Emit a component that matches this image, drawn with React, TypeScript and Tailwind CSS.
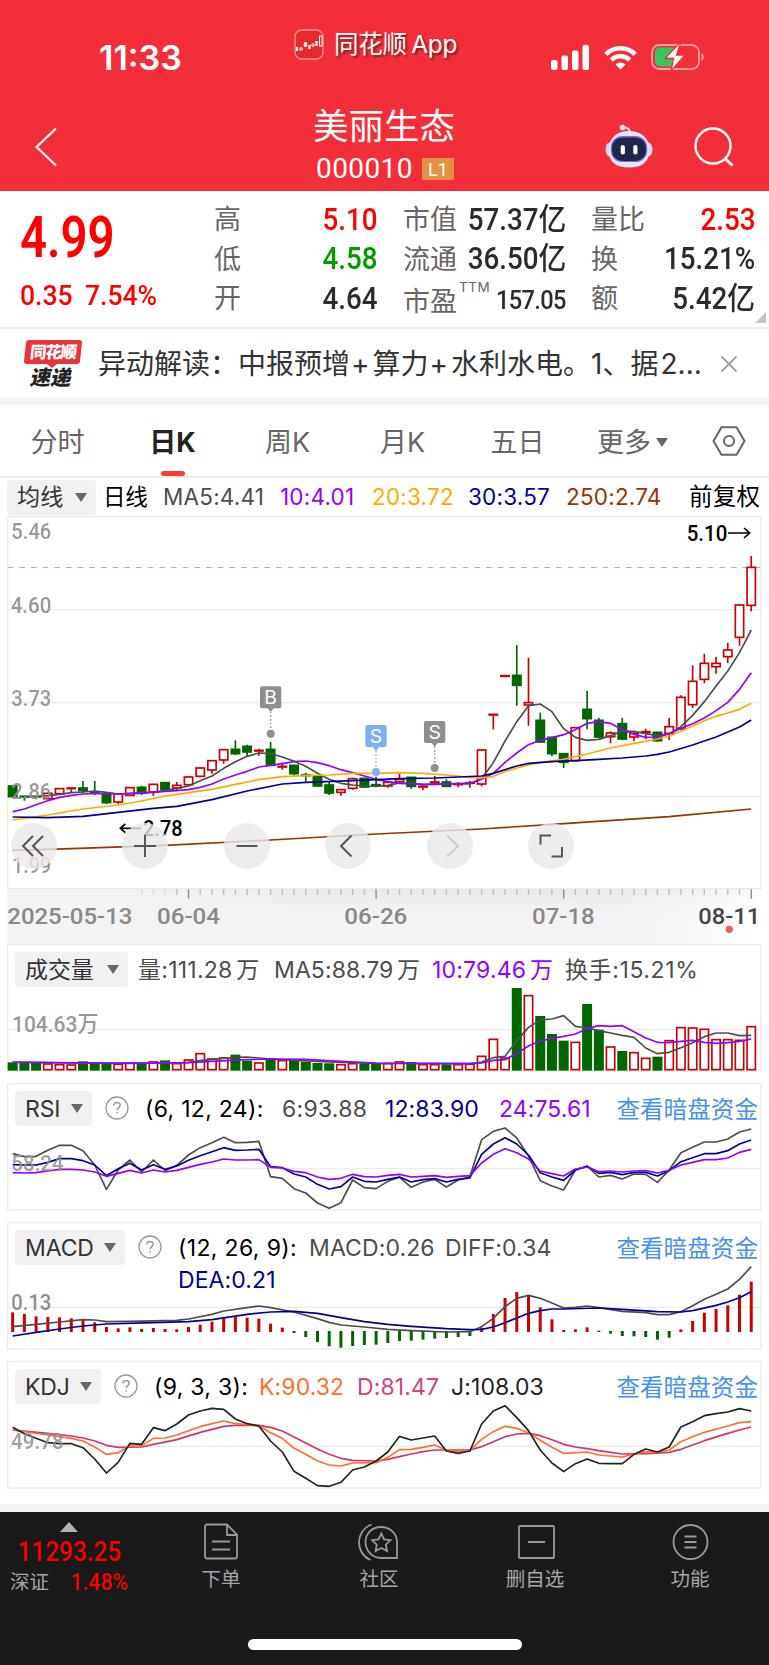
import { cva } from "class-variance-authority";
import { clsx } from "clsx";
import type { ReactNode } from "react";

type Ponto = [number, number];
// cor, máxima, topo do corpo, base do corpo, mínima
type Candle = ["r" | "g", number, number, number, number];

// charts are drawn at 3x
const X0 = 38;
const STEP = 35.17;
const px = (i: number) => X0 + STEP * i;

const RED = "#cc0000";
const GREEN = "#006600";
const GRAY = "#4d4d4d";
const NAVY = "#000099";
const PURPLE = "#9500ff";
const ORANGE = "#ffaa00";
const BROWN = "#993300";
const GRID = "#ebebeb";

const candles: Candle[] = [
  ["g", 828, 828, 860, 860], ["g", 858, 858, 862, 872], ["g", 857, 858, 863, 868], ["r", 848, 850, 866, 868],
  ["r", 834, 836, 851, 853], ["r", 833, 833, 838, 848], ["g", 813, 834, 842, 850], ["g", 813, 846, 851, 855],
  ["g", 852, 852, 878, 882], ["r", 850, 852, 876, 882], ["r", 831, 833, 856, 858], ["g", 827, 832, 848, 855],
  ["r", 821, 823, 846, 858], ["g", 817, 818, 838, 842], ["r", 816, 826, 834, 840], ["r", 798, 801, 824, 826],
  ["r", 772, 774, 799, 801], ["r", 750, 752, 780, 791], ["r", 717, 719, 750, 761], ["g", 691, 718, 731, 735],
  ["g", 704, 709, 726, 740], ["r", 716, 720, 725, 737], ["g", 695, 718, 766, 768], ["r", 758, 768, 773, 779],
  ["g", 766, 766, 791, 796], ["g", 788, 794, 800, 815], ["g", 799, 799, 828, 830], ["g", 815, 825, 849, 855],
  ["r", 836, 839, 847, 857], ["r", 803, 806, 835, 839], ["g", 805, 805, 831, 833], ["g", 800, 823, 829, 830],
  ["r", 812, 817, 828, 833], ["r", 790, 808, 815, 818], ["g", 801, 802, 829, 836], ["r", 826, 828, 833, 840],
  ["r", 798, 815, 820, 822], ["g", 808, 816, 829, 831], ["r", 817, 821, 826, 832], ["r", 812, 817, 822, 833],
  ["r", 718, 720, 822, 829], ["r", 612, 612, 617, 658], ["r", 496, 496, 500, 500], ["g", 405, 496, 526, 587],
  ["r", 443, 578, 585, 647], ["g", 608, 631, 696, 698], ["g", 680, 682, 731, 739], ["g", 729, 731, 757, 774],
  ["r", 651, 653, 752, 754], ["g", 543, 598, 626, 658], ["g", 624, 631, 681, 685], ["r", 664, 669, 680, 700],
  ["g", 624, 641, 687, 691], ["r", 666, 670, 681, 694], ["r", 656, 664, 669, 687], ["g", 665, 667, 692, 695],
  ["r", 624, 650, 670, 690], ["r", 556, 562, 657, 660], ["r", 466, 514, 584, 594], ["r", 431, 460, 508, 520],
  ["r", 441, 460, 470, 491], ["r", 399, 420, 440, 459], ["r", 283, 285, 382, 407], ["r", 138, 172, 286, 304],
];

const ma5: Ponto[] = [[1, 860], [2, 860], [3, 857], [4, 853], [5, 848], [6, 846], [7, 843], [8, 847], [9, 852], [10, 850], [11, 848], [12, 846], [13, 842], [14, 835], [15, 828], [16, 812], [17, 798], [18, 775], [19, 755], [20, 739], [21, 729], [22, 731], [23, 741], [24, 754], [25, 769], [26, 790], [27, 808], [28, 820], [29, 825], [30, 828], [31, 829], [32, 826], [33, 819], [34, 820], [35, 823], [36, 822], [37, 822], [38, 820], [39, 820], [40, 806], [41, 758], [42, 693], [43, 635], [44, 587], [45, 582], [46, 605], [47, 656], [48, 682], [49, 691], [50, 688], [51, 677], [52, 663], [53, 664], [54, 671], [55, 677], [56, 671], [57, 650], [58, 616], [59, 575], [60, 528], [61, 483], [62, 428], [63, 360]];
const ma10: Ponto[] = [[0, 905], [1, 897], [2, 884], [3, 872], [4, 862], [5, 856], [6, 852], [7, 850], [8, 851], [9, 852], [10, 851], [11, 850], [12, 847], [13, 844], [14, 842], [15, 839], [16, 832], [17, 822], [18, 807], [19, 795], [20, 784], [21, 771], [22, 766], [23, 761], [24, 755], [25, 753], [26, 758], [27, 767], [28, 779], [29, 788], [30, 798], [31, 808], [32, 815], [33, 820], [34, 822], [35, 824], [36, 823], [37, 822], [38, 822], [39, 821], [40, 808], [41, 790], [42, 757], [43, 729], [44, 704], [45, 691], [46, 683], [47, 674], [48, 659], [49, 640], [50, 635], [51, 640], [52, 659], [53, 673], [54, 682], [55, 681], [56, 672], [57, 655], [58, 641], [59, 624], [60, 602], [61, 577], [62, 538], [63, 488]];
const ma20: Ponto[] = [[0, 930], [3, 915], [6, 897], [9, 885], [11, 873], [13, 858], [15, 848], [17, 838], [19, 823], [21, 809], [23, 800], [25, 797], [27, 795], [29, 790], [31, 790], [33, 788], [35, 790], [37, 795], [39, 802], [40, 804], [41, 799], [42, 785], [43, 774], [44, 765], [45, 757], [47, 748], [49, 732], [51, 714], [53, 700], [55, 687], [56, 678], [57, 664], [58, 648], [59, 632], [60, 619], [61, 609], [62, 598], [63, 580]];
const ma30: Ponto[] = [[0, 921], [3, 923], [6, 919], [9, 907], [12, 895], [14, 889], [17, 869], [20, 843], [23, 822], [25, 817], [29, 812], [31, 809], [33, 806], [36, 804], [38, 801], [40, 798], [41, 790], [43, 768], [44, 760], [46, 755], [48, 752], [50, 748], [52, 744], [54, 738], [55, 733], [56, 726], [58, 705], [60, 681], [62, 651], [63, 630]];
const ma250: Ponto[] = [[0, 1021], [5, 1016], [13, 1006], [22, 990], [31, 972], [40, 957], [47, 941], [56, 920], [63, 897]];

const volumes = [
  367, 369, 367, 372, 374, 375, 364, 366, 370, 373, 370, 371, 366, 361, 371, 360, 341, 357, 354, 344, 362, 369,
  355, 362, 362, 366, 369, 370, 374, 371, 370, 370, 371, 366, 366, 374, 374, 373, 374, 373, 349, 298, 354, 144,
  167, 228, 282, 302, 307, 192, 269, 321, 333, 338, 355, 350, 302, 263, 264, 268, 299, 299, 301, 260,
];
const volMa5: Ponto[] = [[0, 367], [6, 369], [14, 369], [15, 367], [16, 362], [17, 358], [19, 352], [20, 351], [21, 354], [22, 357], [24, 361], [27, 366], [31, 370], [39, 371], [40, 366], [41, 353], [42, 349], [43, 302], [44, 262], [45, 240], [46, 237], [47, 227], [48, 259], [49, 264], [50, 272], [51, 279], [52, 286], [53, 292], [54, 324], [55, 341], [56, 337], [57, 323], [58, 308], [59, 290], [60, 279], [61, 279], [62, 287], [63, 286]];
const volMa10: Ponto[] = [[0, 366], [4, 368], [9, 370], [15, 368], [17, 364], [20, 359], [22, 357], [25, 358], [28, 364], [31, 369], [39, 371], [40, 369], [41, 361], [42, 359], [43, 340], [44, 318], [45, 303], [46, 295], [47, 289], [48, 282], [49, 266], [50, 257], [51, 259], [52, 257], [53, 275], [54, 294], [55, 307], [56, 308], [57, 304], [58, 301], [59, 307], [60, 310], [61, 308], [62, 304], [63, 297]];

const seq = (ys: number[]): Ponto[] => ys.map((y, i) => [i, y]);

const rsi6 = seq([641, 650, 649, 631, 616, 616, 632, 675, 748, 690, 660, 696, 660, 692, 676, 645, 623, 608, 592, 608, 607, 604, 710, 715, 746, 759, 789, 805, 788, 720, 743, 746, 724, 712, 742, 726, 718, 741, 720, 710, 599, 574, 564, 594, 648, 722, 738, 750, 690, 678, 711, 706, 717, 702, 703, 727, 690, 638, 622, 606, 606, 597, 576, 567]);
const rsi12 = seq([674, 675, 675, 667, 656, 656, 662, 675, 707, 686, 670, 690, 674, 688, 678, 661, 647, 635, 623, 631, 630, 628, 680, 683, 702, 711, 733, 747, 740, 711, 724, 726, 718, 711, 726, 719, 716, 726, 718, 714, 643, 612, 593, 612, 645, 698, 711, 721, 690, 679, 700, 697, 704, 697, 697, 708, 692, 665, 653, 641, 641, 632, 612, 600]);
const rsi24 = seq([698, 699, 698, 693, 688, 688, 690, 696, 709, 700, 691, 699, 690, 696, 691, 682, 673, 666, 657, 660, 660, 659, 682, 684, 694, 698, 711, 718, 715, 703, 710, 711, 706, 703, 711, 709, 707, 712, 709, 707, 669, 643, 626, 638, 657, 693, 701, 708, 687, 681, 695, 693, 696, 693, 692, 699, 691, 675, 667, 659, 659, 654, 637, 628]);

const macd = [
  292, 297, 304, 306, 307, 310, 315, 322, 336, 340, 337, 342, 339, 342, 343, 336, 329, 320, 310, 306, 308, 311,
  326, 338, 354, 366, 381, 394, 398, 393, 390, 389, 384, 378, 377, 374, 371, 369, 366, 363, 338, 297, 249, 231,
  240, 277, 313, 345, 343, 337, 347, 356, 363, 364, 366, 374, 368, 343, 318, 293, 282, 271, 239, 200,
];
const diff: Ponto[] = [[0, 335], [2, 328], [4, 321], [6, 314], [7, 315], [8, 320], [10, 319], [14, 316], [15, 312], [17, 298], [18, 288], [20, 278], [21, 273], [22, 278], [24, 291], [26, 311], [27, 322], [28, 330], [30, 336], [32, 343], [34, 347], [37, 351], [39, 350], [40, 335], [41, 310], [42, 275], [43, 250], [44, 241], [45, 250], [46, 264], [47, 279], [48, 277], [49, 273], [50, 278], [52, 289], [54, 293], [55, 299], [56, 299], [57, 290], [58, 272], [59, 253], [60, 238], [61, 222], [62, 193], [63, 155]];
const dea: Ponto[] = [[0, 363], [2, 352], [4, 342], [6, 333], [8, 327], [12, 323], [15, 320], [17, 314], [20, 298], [22, 291], [24, 289], [26, 295], [28, 308], [30, 320], [32, 328], [34, 334], [37, 341], [39, 344], [40, 343], [41, 336], [42, 323], [43, 309], [44, 295], [45, 287], [46, 282], [47, 282], [50, 279], [52, 283], [55, 290], [57, 291], [58, 287], [60, 271], [61, 261], [62, 248], [63, 230]];

const linhaJ = seq([637, 656, 670, 683, 686, 686, 698, 732, 774, 742, 685, 688, 638, 647, 627, 600, 588, 580, 583, 612, 626, 633, 678, 711, 769, 790, 812, 814, 802, 765, 756, 738, 711, 664, 675, 669, 663, 708, 715, 708, 627, 588, 572, 608, 647, 705, 744, 770, 746, 732, 745, 746, 746, 718, 702, 711, 696, 636, 620, 602, 596, 591, 581, 588]);
const linhaK: Ponto[] = [[0, 645], [3, 660], [5, 670], [6, 678], [7, 696], [8, 718], [9, 713], [10, 692], [11, 692], [12, 670], [13, 669], [14, 660], [16, 635], [17, 626], [18, 618], [19, 626], [21, 632], [22, 653], [23, 670], [24, 700], [25, 718], [26, 738], [27, 750], [28, 753], [29, 744], [31, 743], [32, 727], [33, 704], [34, 703], [35, 697], [36, 690], [37, 706], [38, 710], [39, 707], [40, 673], [41, 650], [42, 634], [43, 640], [44, 653], [45, 676], [46, 697], [47, 715], [49, 711], [50, 720], [51, 723], [52, 726], [53, 717], [54, 710], [55, 711], [56, 705], [57, 680], [58, 665], [59, 652], [61, 633], [62, 623], [63, 620]];
const linhaD: Ponto[] = [[0, 645], [3, 655], [5, 663], [6, 669], [7, 678], [8, 691], [9, 697], [11, 696], [12, 688], [14, 674], [16, 652], [18, 634], [19, 631], [21, 631], [22, 637], [23, 648], [24, 666], [25, 684], [26, 702], [27, 718], [28, 730], [29, 736], [31, 738], [32, 733], [33, 725], [34, 717], [35, 710], [36, 705], [39, 705], [40, 695], [41, 680], [42, 665], [43, 657], [44, 655], [45, 662], [46, 674], [47, 688], [48, 696], [49, 701], [50, 707], [51, 712], [52, 717], [54, 716], [56, 712], [57, 703], [59, 677], [61, 655], [62, 645], [63, 636]];

function Line({ pts, color, w = 5 }: { pts: Ponto[]; color: string; w?: number }) {
  return (
    <polyline
      points={pts.map(([i, y]) => `${px(i)},${y}`).join(" ")}
      fill="none"
      stroke={color}
      strokeWidth={w}
      strokeLinejoin="round"
    />
  );
}

interface LabelProps {
  x: number;
  y: number;
  w: number;
  size?: number;
  fill?: string;
  weight?: number;
  children: ReactNode;
}

function Label({ x, y, w, size = 67, fill = "#8f8f8f", weight = 500, children }: LabelProps) {
  return (
    <text
      x={x}
      y={y}
      textLength={w}
      lengthAdjust="spacingAndGlyphs"
      fontSize={size}
      fontWeight={weight}
      fill={fill}
      className="font-[Roboto,'Noto_Sans_CJK_SC',sans-serif]"
    >
      {children}
    </text>
  );
}

function Frame({ y, h, grid }: { y: number; h: number; grid: number[] }) {
  return (
    <g stroke={GRID} fill="none" strokeWidth={4}>
      <rect x={23} y={y} width={2260} height={h} />
      {grid.map((g) => (
        <path key={g} d={`M23 ${g}H2283`} />
      ))}
    </g>
  );
}

function Marker({ x, y, letter, color, dot }: { x: number; y: number; letter: string; color: string; dot: number }) {
  return (
    <g>
      <rect x={x - 32} y={y} width={64} height={66} rx={6} fill={color} />
      <path d={`M${x - 10} ${y + 65}h20l-10 12z`} fill={color} />
      <path d={`M${x} ${y + 76}V${dot}`} stroke={color} strokeWidth={4} strokeDasharray="5 6" />
      <circle cx={x} cy={dot} r={12} fill={color} />
      <text x={x} y={y + 54} textAnchor="middle" fontSize={58} fill="#fff" className="font-[Inter,sans-serif]">
        {letter}
      </text>
    </g>
  );
}

const Din = ({ className, children }: { className?: string; children: ReactNode }) => (
  <span
    className={clsx(
      "inline-block whitespace-nowrap font-[Roboto,'Noto_Sans_CJK_SC',sans-serif] font-medium leading-none",
      className,
    )}
  >
    {children}
  </span>
);

const Caret = ({ className = "" }: { className?: string }) => (
  <svg viewBox="0 0 12 9" className={clsx("h-[9px] w-3 fill-[#666]", className)}>
    <path d="M0 0H12L6 9Z" />
  </svg>
);

const chip = cva(
  "flex h-[35px] shrink-0 items-center justify-between rounded bg-[#f1f1f1] pl-2.5 pr-[9px] text-[23px] text-[#333] whitespace-nowrap",
);

function Help() {
  return (
    <svg viewBox="0 0 24 24" className="size-6 shrink-0" fill="none" stroke="#999" strokeWidth="1.3">
      <circle cx="12" cy="12" r="11" />
      <path d="M8.9 9.6C8.9 7.6 10.2 6.5 12 6.5s3.2 1.1 3.2 2.8c0 2.2-3.1 2.4-3.1 4.9M12.1 16.2v1.6" strokeWidth="1.5" />
    </svg>
  );
}

function StatusBar() {
  return (
    <div className="flex h-[110px] items-start text-white">
      <div className="w-[294px] pl-[99px] pt-[37px] text-[34px] font-semibold leading-[42px]">11:33</div>
      <div className="flex w-[257px] items-center gap-[10px] pt-[28px]">
        <svg viewBox="0 0 30 31" className="h-[31px] w-[30px]" fill="none">
          <rect x="1" y="1" width="28" height="29" rx="6.5" fill="#e32a2c" stroke="#f8918f" strokeWidth="1.4" />
          <path d="M3 18v4M11.500 13v5M15.500 16v4M22.500 12v5" stroke="#fff" strokeWidth="2.200" />
          <circle cx="7" cy="20" r="1.300" stroke="#fff" />
          <circle cx="11.500" cy="15.500" r="1.500" stroke="#fff" />
          <circle cx="19" cy="16" r="1.300" stroke="#fff" />
          <rect x="25.500" y="7" width="2.500" height="10" stroke="#fff" />
        </svg>
        <span className="whitespace-nowrap text-[24.500px] leading-[33px] tracking-[-0.300px] [text-shadow:2px_2px_2px_rgba(0,0,0,.45)] [word-spacing:-2px]">
          同花顺 App
        </span>
      </div>
      <div className="flex items-center gap-[14px] pt-[43px]">
        <svg viewBox="0 0 39 25" className="h-[25px] w-[39px] fill-white">
          <rect x="0" y="15" width="6.500" height="10" rx="2" />
          <rect x="10.500" y="10.500" width="6.500" height="14.500" rx="2" />
          <rect x="21" y="5.500" width="6.500" height="19.500" rx="2" />
          <rect x="31.500" y="0" width="6.500" height="25" rx="2" />
        </svg>
        <svg viewBox="0 0 33 25" className="h-[25px] w-[33px]" fill="none" stroke="#fff" strokeWidth="4.600">
          <path d="M1.800 9.300a21 21 0 0 1 29.400 0M7.200 15a13.300 13.300 0 0 1 18.600 0" />
          <path d="M16.500 24.500l-5-5a7.300 7.300 0 0 1 10 0z" fill="#fff" stroke="none" />
        </svg>
        <svg viewBox="0 0 53 28" className="h-7 w-[53px]" fill="none">
          <rect x="1" y="2" width="47" height="24" rx="7.500" stroke="#f9a0a3" strokeWidth="1.800" />
          <path d="M50.500 10v8a4.500 4.500 0 0 0 0-8z" fill="#f9a0a3" />
          <path d="M9 4.500h14v19H9a5 5 0 0 1-5-5v-9a5 5 0 0 1 5-5z" fill="#34c759" />
          <path d="M28.500 0L14 15.500h8.500L20 28l14-16h-8.500L29.500 0z" fill="#fff" stroke="#f22f38" strokeWidth="1.300" />
        </svg>
      </div>
    </div>
  );
}

function Robot() {
  return (
    <svg viewBox="0 0 48 44" className="h-[44px] w-12">
      <path d="M24.500 9C25.500 5 22.500 4 18 3" stroke="#e9dcf4" strokeWidth="2" fill="none" />
      <circle cx="17.500" cy="3.500" r="2.800" fill="#f1e9fb" />
      <ellipse cx="4.500" cy="25.500" rx="4" ry="7" fill="#cfd0f2" />
      <ellipse cx="43.500" cy="25.500" rx="4" ry="7" fill="#cfd0f2" />
      <path d="M24 7C36 7 44.500 14 44.500 26S37 43.500 24 43.500 3.500 38 3.500 26 12 7 24 7Z" fill="#e6e6f8" />
      <rect x="5.800" y="12" width="36.400" height="26" rx="11.500" fill="#7b6ae6" />
      <rect x="7" y="13.500" width="34" height="23.500" rx="10.500" fill="#1f2749" />
      <rect x="15.700" y="21" width="4.200" height="9.500" rx="2" fill="#fff" />
      <rect x="28.300" y="21" width="4.200" height="9.500" rx="2" fill="#fff" />
    </svg>
  );
}

function TitleBar() {
  return (
    <div className="flex h-[81px] text-white">
      <div className="w-[240px] pl-[35px] pt-[17px]">
        <svg viewBox="0 0 22 40" className="h-10 w-[22px]" fill="none" stroke="#fff" strokeWidth="2.200">
          <path d="M21 1.500L1.500 20 21 38.500" />
        </svg>
      </div>
      <div className="flex w-[288px] flex-col items-center">
        <div className="h-[38px] whitespace-nowrap text-[35.500px] leading-[34px]">美丽生态</div>
        <div className="flex items-center gap-[9px] pl-0.5 pt-0.5">
          <span className="font-[Roboto] text-[28px] leading-[46px] tracking-[0.400px]">000010</span>
          <span className="flex h-[22px] w-8 items-center justify-center bg-[#e29244] font-[Roboto] text-[18px]">L1</span>
        </div>
      </div>
      <div className="flex gap-[41px] pl-[77px] pt-[14px]">
        <Robot />
        <svg viewBox="0 0 40 40" className="mt-[3px] size-10" fill="none" stroke="#fff" strokeWidth="2.400">
          <circle cx="19" cy="19" r="17.500" />
          <path d="M31 31.500l7.500 7" strokeWidth="3" />
        </svg>
      </div>
    </div>
  );
}

const stat = cva("", {
  variants: {
    tone: { up: "text-[#ff0000]", down: "text-[#009900]", plain: "text-[#2b2b2b]" },
  },
});

function Row({ label, value, tone = "plain" }: { label: ReactNode; value: ReactNode; tone?: "up" | "down" | "plain" }) {
  return (
    <div className="flex h-[39.500px] items-center justify-between whitespace-nowrap">
      <span className="text-[27px] leading-none text-[#666]">{label}</span>
      <Din className={clsx("origin-right scale-x-[.91] text-[30.500px]", stat({ tone }))}>{value}</Din>
    </div>
  );
}

function Quote() {
  return (
    <div className="flex h-[138px] border-b-2 border-[#ededed] pt-[9px]">
      <div className="flex w-[214px] flex-col pl-5 text-[#ff0000]">
        <Din className="mt-[9px] origin-left scale-x-[.83] text-[57px] font-semibold">4.99</Din>
        <div className="mt-[16px] flex">
          <Din className="w-[65px] origin-left scale-x-[.93] text-[28.500px]">0.35</Din>
          <Din className="origin-left scale-x-[.93] text-[28.500px]">7.54%</Din>
        </div>
      </div>
      <div className="mr-[26px] w-[163px]">
        <Row label="高" value="5.10" tone="up" />
        <Row label="低" value="4.58" tone="down" />
        <Row label="开" value="4.64" />
      </div>
      <div className="mr-[25px] w-[163px]">
        <Row label="市值" value="57.37亿" />
        <Row label="流通" value="36.50亿" />
        <Row
          label={
            <span className="flex w-[54px] pt-[5px]">
              市盈<span className="-mt-[7px] ml-0.5 text-[13.500px] leading-none tracking-[0.500px]">TTM</span>
            </span>
          }
          value={<span className="text-[26px] tracking-[-0.700px]">157.05</span>}
        />
      </div>
      <div className="w-[164px]">
        <Row label="量比" value="2.53" tone="up" />
        <Row label="换" value="15.21%" />
        <Row label="额" value="5.42亿" />
      </div>
      <svg viewBox="0 0 11 11" className="mt-auto mb-1 size-[11px] fill-[#c4c4c4]">
        <path d="M11 0V11H0Z" />
      </svg>
    </div>
  );
}

function News() {
  return (
    <div className="flex h-[69px] items-center">
      <div className="ml-[25px] w-[73px]">
        <div className="flex h-6 w-[56px] -skew-x-6 items-center justify-center rounded-[3px] bg-[#e7333a] text-[16.500px] font-black leading-none tracking-[-1.200px] text-white">
          同花顺
        </div>
        <svg viewBox="0 0 10 4" className="ml-[22px] h-1 w-2.5 fill-[#e7333a]">
          <path d="M0 0H10L5 4Z" />
        </svg>
        <div className="ml-[6px] w-[44px] -skew-x-12 text-[20.500px] font-black leading-[20px] text-[#222]">速递</div>
      </div>
      <div className="w-[604px] whitespace-nowrap text-[28px] text-[#333]">
        异动解读：中报预增<span className="ml-px mr-[3px]">+</span>算力<span className="ml-px mr-[3px]">+</span>
        水利水电。1、据<span className="ml-0.5">2...</span>
      </div>
      <svg viewBox="0 0 16 16" className="ml-[19px] size-4" stroke="#999" strokeWidth="1.800">
        <path d="M0.500 0.500L15.500 15.500M15.500 0.500L0.500 15.500" />
      </svg>
    </div>
  );
}

const abas = ["分时", "日K", "周K", "月K", "五日", "更多"];

function Tabs() {
  return (
    <div className="flex h-[73px] border-b-2 border-[#ededed]">
      {abas.map((aba) => {
        const ativa = aba === "日K";
        return (
          <div
            key={aba}
            className={clsx(
              "flex w-[115px] flex-col items-center text-[27px] leading-none",
              ativa ? "font-bold text-[#222]" : "text-[#666]",
            )}
          >
            <div className="flex h-[66px] items-center gap-[5px] pt-2">
              {aba}
              {aba === "更多" && <Caret className="h-3 w-3" />}
            </div>
            {ativa && <div className="h-[5px] w-6 rounded-full bg-[#ff3a30]" />}
          </div>
        );
      })}
      <svg viewBox="0 0 34 30" className="ml-[22px] mt-[21px] h-[30px] w-[34px]" fill="none" stroke="#666" strokeWidth="2">
        <path d="M9.500 1.200H24.500L32.500 15 24.500 28.800H9.500L1.500 15Z" />
        <circle cx="17" cy="15" r="5" />
      </svg>
    </div>
  );
}

function Averages() {
  return (
    <div className="flex h-[38px] items-center whitespace-nowrap pl-[7px] text-[22.500px] tracking-[0.200px]">
      <div className={clsx(chip(), "mr-[7px] w-[89px] pl-2")}>
        均线
        <Caret />
      </div>
      <span className="w-[60px] tracking-[-0.200px] text-black">日线</span>
      <span className="w-[117px] text-[#4d4d4d]">MA5:4.41</span>
      <span className="w-[92px] text-[#9500ff]">10:4.01</span>
      <span className="w-[96px] text-[#ffaa00]">20:3.72</span>
      <span className="w-[98px] text-[#000099]">30:3.57</span>
      <span className="w-[123px] text-[#993300]">250:2.74</span>
      <span className="text-[23.500px] text-black">前复权</span>
    </div>
  );
}

const botoes = [
  { d: "M22 13L12 23l10 10M32 13L22 23l10 10", cls: "mr-[65px]" },
  { d: "M12 23h22M23 12v22", cls: "mr-[56px]" },
  { d: "M12.500 23h21", cls: "mr-[55px]" },
  { d: "M26.500 12.500L16 23l10.500 10.500", cls: "mr-[56px]" },
  { d: "M20 12.500L31 23 20 33.500", cls: "mr-[55px]", off: true },
  { d: "M12.500 21.500v-9h10.500M34 24v9.500H23.500", cls: "" },
];

function MainChart() {
  return (
    <div className="relative">
      <svg viewBox="0 18 2307 1284" className="block h-[428px] w-full">
        <defs>
          <linearGradient id="axisX">
            <stop offset="0" stopColor="#f3f3f3" />
            <stop offset=".82" stopColor="#f3f3f3" />
            <stop offset="1" stopColor="#fff" />
          </linearGradient>
          <linearGradient id="axisY" x2="0" y2="1">
            <stop offset="0" stopColor="#e6e6e6" />
            <stop offset="1" stopColor="#f3f3f3" stopOpacity="0" />
          </linearGradient>
          <linearGradient id="axisFade">
            <stop offset=".2" stopColor="#fff" stopOpacity="0" />
            <stop offset=".45" stopColor="#fff" />
            <stop offset=".75" stopColor="#fff" />
            <stop offset="1" stopColor="#fff" stopOpacity=".1" />
          </linearGradient>
          <mask id="axisMask">
            <rect x={22} y={1137} width={2262} height={90} fill="url(#axisFade)" />
          </mask>
        </defs>
        <rect x={22} y={1137} width={2262} height={165} fill="url(#axisX)" />
        <rect x={22} y={1137} width={2262} height={90} fill="url(#axisY)" mask="url(#axisMask)" />
        <Frame y={20} h={1116} grid={[299, 578, 859]} />
        <path d="M23 172.500H2283" stroke="#d9a96b" strokeWidth={3} strokeDasharray="17 18" />

        {candles.map(([cor, alta, topo, base, baixa], i) => {
          const x = px(i);
          const color = cor === "r" ? RED : GREEN;
          const fina = base - topo < 7;
          return (
            <g key={i} stroke={color} strokeWidth={5}>
              <path d={`M${x} ${alta}V${topo}M${x} ${base}V${baixa}`} />
              <rect
                x={x - 12.5}
                y={topo + (fina ? 1 : 0)}
                width={25}
                height={fina ? 2 : base - topo}
                fill={cor === "r" ? "#fff" : color}
              />
            </g>
          );
        })}

        <Line pts={ma5} color={GRAY} />
        <Line pts={ma10} color={PURPLE} />
        <Line pts={ma20} color={ORANGE} />
        <Line pts={ma30} color={NAVY} />
        <Line pts={ma250} color={BROWN} />

        <g opacity={0.9}>
          <Label x={34} y={88} w={120}>5.46</Label>
          <Label x={32} y={308} w={122}>4.60</Label>
          <Label x={34} y={588} w={120}>3.73</Label>
          <Label x={34} y={867} w={120}>2.86</Label>
          <Label x={36} y={1088} w={118}>1.99</Label>
        </g>
        <Label x={429} y={977} w={119} fill="#000">2.78</Label>
        <path d="M362 955H424M376 942L361 955L376 968" stroke="#000" strokeWidth={5} fill="none" />
        <Label x={2060} y={93} w={122} fill="#000">5.10</Label>
        <path d="M2184 69H2248M2232 54L2249 69L2232 84" stroke="#000" strokeWidth={5} fill="none" />

        <Marker x={812} y={529} letter="B" color="#8f8f8f" dot={671} />
        <Marker x={1128} y={645} letter="S" color="#7fb0f5" dot={786} />
        <Marker x={1304} y={633} letter="S" color="#8f8f8f" dot={774} />

        {Array.from({ length: 53 }, (_, k) => k + 11).map((i) => {
          const grande = i % 16 === 15;
          return (
            <path
              key={i}
              d={`M${px(i)} 1138V${grande ? 1166 : 1155}`}
              stroke={grande ? "#888" : "#bbb"}
              strokeWidth={4}
              opacity={i < 14 ? 0.4 : 1}
            />
          );
        })}
        <Label x={22} y={1241} w={375} fill="#888">2025-05-13</Label>
        <Label x={471} y={1241} w={189} fill="#888">06-04</Label>
        <Label x={1033} y={1241} w={189} fill="#888">06-26</Label>
        <Label x={1596} y={1241} w={188} fill="#888">07-18</Label>
        <Label x={2095} y={1241} w={186} fill="#444">08-11</Label>
        <circle cx={2188} cy={1258} r={11} fill="#f65a5a" />
      </svg>

      <div className="absolute left-[10.500px] top-[307px] flex">
        {botoes.map(({ d, cls, off }) => (
          <svg key={d} viewBox="0 0 46 46" className={clsx("size-[46px]", cls)} fill="none">
            <circle cx="23" cy="23" r="23" fill="#e8e8e8" fillOpacity=".8" />
            <path d={d} stroke={off ? "#ccc" : "#555"} strokeWidth="2" />
          </svg>
        ))}
      </div>
    </div>
  );
}

interface PanelProps {
  name: string;
  chipClass: string;
  chart: ReactNode;
  viewBox: string;
  heightClass: string;
  link?: boolean;
  help?: boolean;
  children: ReactNode;
}

function Panel({ name, chipClass, chart, viewBox, heightClass, link, help, children }: PanelProps) {
  return (
    <section className={clsx("relative", heightClass)}>
      <svg viewBox={viewBox} className="absolute inset-0 size-full">
        {chart}
      </svg>
      <div className="relative flex items-start whitespace-nowrap pl-[15px] pt-2 text-[23px] leading-[37px] tracking-[0.100px]">
        <div className={clsx(chip(), chipClass)}>
          <span className="pt-px tracking-[-0.100px]">{name}</span>
          <Caret />
        </div>
        {help && (
          <div className="ml-[13px] mt-[5px]">
            <Help />
          </div>
        )}
        {children}
        {link && (
          <span className="ml-auto mr-[11px] text-[23.600px] tracking-normal text-[#4691ee]">查看暗盘资金</span>
        )}
      </div>
    </section>
  );
}

function Indicators() {
  return (
    <>
      <Panel
        name="成交量"
        chipClass="w-[113px]"
        viewBox="0 12 2307 417"
        heightClass="h-[139px]"
        chart={
          <>
            <Frame y={13} h={380} grid={[268]} />
            {volumes.map((y, i) =>
              candles[i][0] === "g" ? (
                <rect key={i} x={px(i) - 15} y={y} width={30} height={392 - y} fill={GREEN} />
              ) : (
                <rect key={i} x={px(i) - 12.5} y={y} width={25} height={389 - y} fill="#fff" stroke={RED} strokeWidth={5} />
              ),
            )}
            <Line pts={volMa5} color={GRAY} />
            <Line pts={volMa10} color={PURPLE} />
            <Label x={36} y={277} w={259} fill="#999">104.63万</Label>
          </>
        }
      >
        <span className="ml-[10px] w-[136px] tracking-[0.250px] text-[#4d4d4d] [word-spacing:-3px]">量:111.28 万</span>
        <span className="w-[158px] text-[#4d4d4d] [word-spacing:-3px]">MA5:88.79 万</span>
        <span className="w-[133px] tracking-[0.200px] text-[#9500ff] [word-spacing:-3px]">10:79.46 万</span>
        <span className="tracking-[0.600px] text-[#4d4d4d]">换手:15.21%</span>
      </Panel>

      <Panel
        name="RSI"
        chipClass="w-[77px]"
        viewBox="0 429 2307 417"
        heightClass="h-[139px]"
        help
        link
        chart={
          <>
            <Frame y={431} h={379} grid={[685]} />
            <Line pts={rsi6} color={GRAY} />
            <Line pts={rsi12} color={NAVY} />
            <Line pts={rsi24} color={PURPLE} />
            <g opacity={0.85}>
              <Label x={34} y={694} w={157}>58.24</Label>
            </g>
          </>
        }
      >
        <span className="ml-4 w-[137px] tracking-[0.300px] text-black">(6, 12, 24):</span>
        <span className="w-[103px] tracking-[0.250px] text-[#4d4d4d]">6:93.88</span>
        <span className="w-[114px] text-[#000099]">12:83.90</span>
        <span className="text-[#9500ff]">24:75.61</span>
      </Panel>

      <Panel
        name="MACD"
        chipClass="w-[110px]"
        viewBox="0 21 2307 417"
        heightClass="h-[139px]"
        help
        link
        chart={
          <>
            <Frame y={22} h={380} grid={[277]} />
            {macd.map((y, i) => (
              <path key={i} d={`M${px(i)} ${y < 350 ? 351 : 348}V${y}`} stroke={y < 350 ? RED : GREEN} strokeWidth={9} />
            ))}
            <Line pts={diff} color={GRAY} />
            <Line pts={dea} color={NAVY} />
            <Label x={34} y={286} w={120}>0.13</Label>
          </>
        }
      >
        <div className="ml-4 flex flex-col">
          <div className="flex">
            <span className="w-[131px] tracking-[0.350px] text-black">(12, 26, 9):</span>
            <span className="w-[136px] text-[#4d4d4d]">MACD:0.26</span>
            <span className="text-[#4d4d4d]">DIFF:0.34</span>
          </div>
          <span className="-mt-[5px] text-[#000099]">DEA:0.21</span>
        </div>
      </Panel>

      <Panel
        name="KDJ"
        chipClass="w-[86px]"
        viewBox="0 438 2307 429"
        heightClass="h-[143px]"
        help
        link
        chart={
          <>
            <Frame y={439} h={380} grid={[694]} />
            <Line pts={linhaD} color="#d6336c" />
            <Line pts={linhaK} color="#ff6f2c" />
            <Line pts={linhaJ} color="#222" />
            <g opacity={0.85}>
              <Label x={33} y={703} w={158}>49.78</Label>
            </g>
          </>
        }
      >
        <span className="ml-4 w-[105px] tracking-[0.300px] text-black">(9, 3, 3):</span>
        <span className="w-[98px] text-[#ff6f2c]">K:90.32</span>
        <span className="w-[94px] text-[#d6417e]">D:81.47</span>
        <span className="text-[#222]">J:108.03</span>
      </Panel>
    </>
  );
}

const menu = [
  {
    label: "下单",
    cls: "w-[158px]",
    icon: <path d="M4 1.500H25L35 11.500V33.500a2 2 0 0 1-2 2H5a2 2 0 0 1-2-2V3.500a2 2 0 0 1 2-2zM25 1.500V12H35M10 18.500H28M10 26.500H28" />,
  },
  {
    label: "社区",
    cls: "w-[158px]",
    icon: (
      <path d="M21 4C12 4 5.500 10.500 5.500 19S12 35 21 35H37V19C37 10.500 30 4 21 4ZM11.500 1.500C-5 8-5 30 10.500 37M21.300 10.500l2.800 5.900 6.400.8-4.700 4.500 1.200 6.400-5.700-3.100-5.700 3.100 1.200-6.400-4.700-4.500 6.400-.8z" />
    ),
  },
  {
    label: "删自选",
    cls: "w-[154px]",
    icon: <path d="M4 3H37a1 1 0 0 1 1 1V34a1 1 0 0 1-1 1H4a1 1 0 0 1-1-1V4a1 1 0 0 1 1-1zM12 19H29" />,
  },
  {
    label: "功能",
    cls: "w-[156px]",
    icon: (
      <>
        <circle cx="19.500" cy="19" r="17" />
        <path d="M13.500 13.500H25.500M13.500 19H25.500M13.500 24.500H25.500" />
      </>
    ),
  },
];

function Footer() {
  return (
    <footer className="h-[153px] bg-[#1a1a1a]">
      <div className="flex h-[127px]">
        <div className="flex w-[142px] flex-col pt-[10px]">
          <svg viewBox="0 0 18 10" className="ml-[60px] h-2.5 w-[18px] fill-[#b3b3b3]">
            <path d="M9 0L18 10H0Z" />
          </svg>
          <Din className="ml-[18px] mt-[6px] origin-left scale-x-[.87] text-[28px] text-[#ff0000]">11293.25</Din>
          <div className="mt-[2px] flex items-center">
            <span className="ml-[10px] w-[61px] text-[19.500px] leading-[28px] text-[#a6a6a6]">深证</span>
            <Din className="origin-left scale-x-[.88] text-[24px] text-[#ff0000]">1.48%</Din>
          </div>
        </div>
        {menu.map(({ label, icon, cls }) => (
          <div
            key={label}
            className={clsx(
              "flex flex-col items-center gap-1 pt-[11px] text-[19.500px] leading-[28px] text-[#a6a6a6]",
              cls,
            )}
          >
            <svg viewBox="0 0 39 38" className="h-[38px] w-[39px] overflow-visible" fill="none" stroke="#999" strokeWidth="1.800">
              {icon}
            </svg>
            {label}
          </div>
        ))}
      </div>
      <div className="mx-auto h-[11px] w-[274px] rounded-full bg-white" />
    </footer>
  );
}

export default function App() {
  return (
    <div className="h-[1665px] w-[769px] overflow-hidden bg-white font-[Inter,'Noto_Sans_CJK_SC',sans-serif]">
      <header className="bg-[#f22f38]">
        <StatusBar />
        <TitleBar />
      </header>
      <Quote />
      <News />
      <div className="h-[7px] bg-[#f4f4f4]" />
      <Tabs />
      <Averages />
      <MainChart />
      <Indicators />
      <div className="h-2 bg-[#f4f4f4]" />
      <Footer />
    </div>
  );
}
